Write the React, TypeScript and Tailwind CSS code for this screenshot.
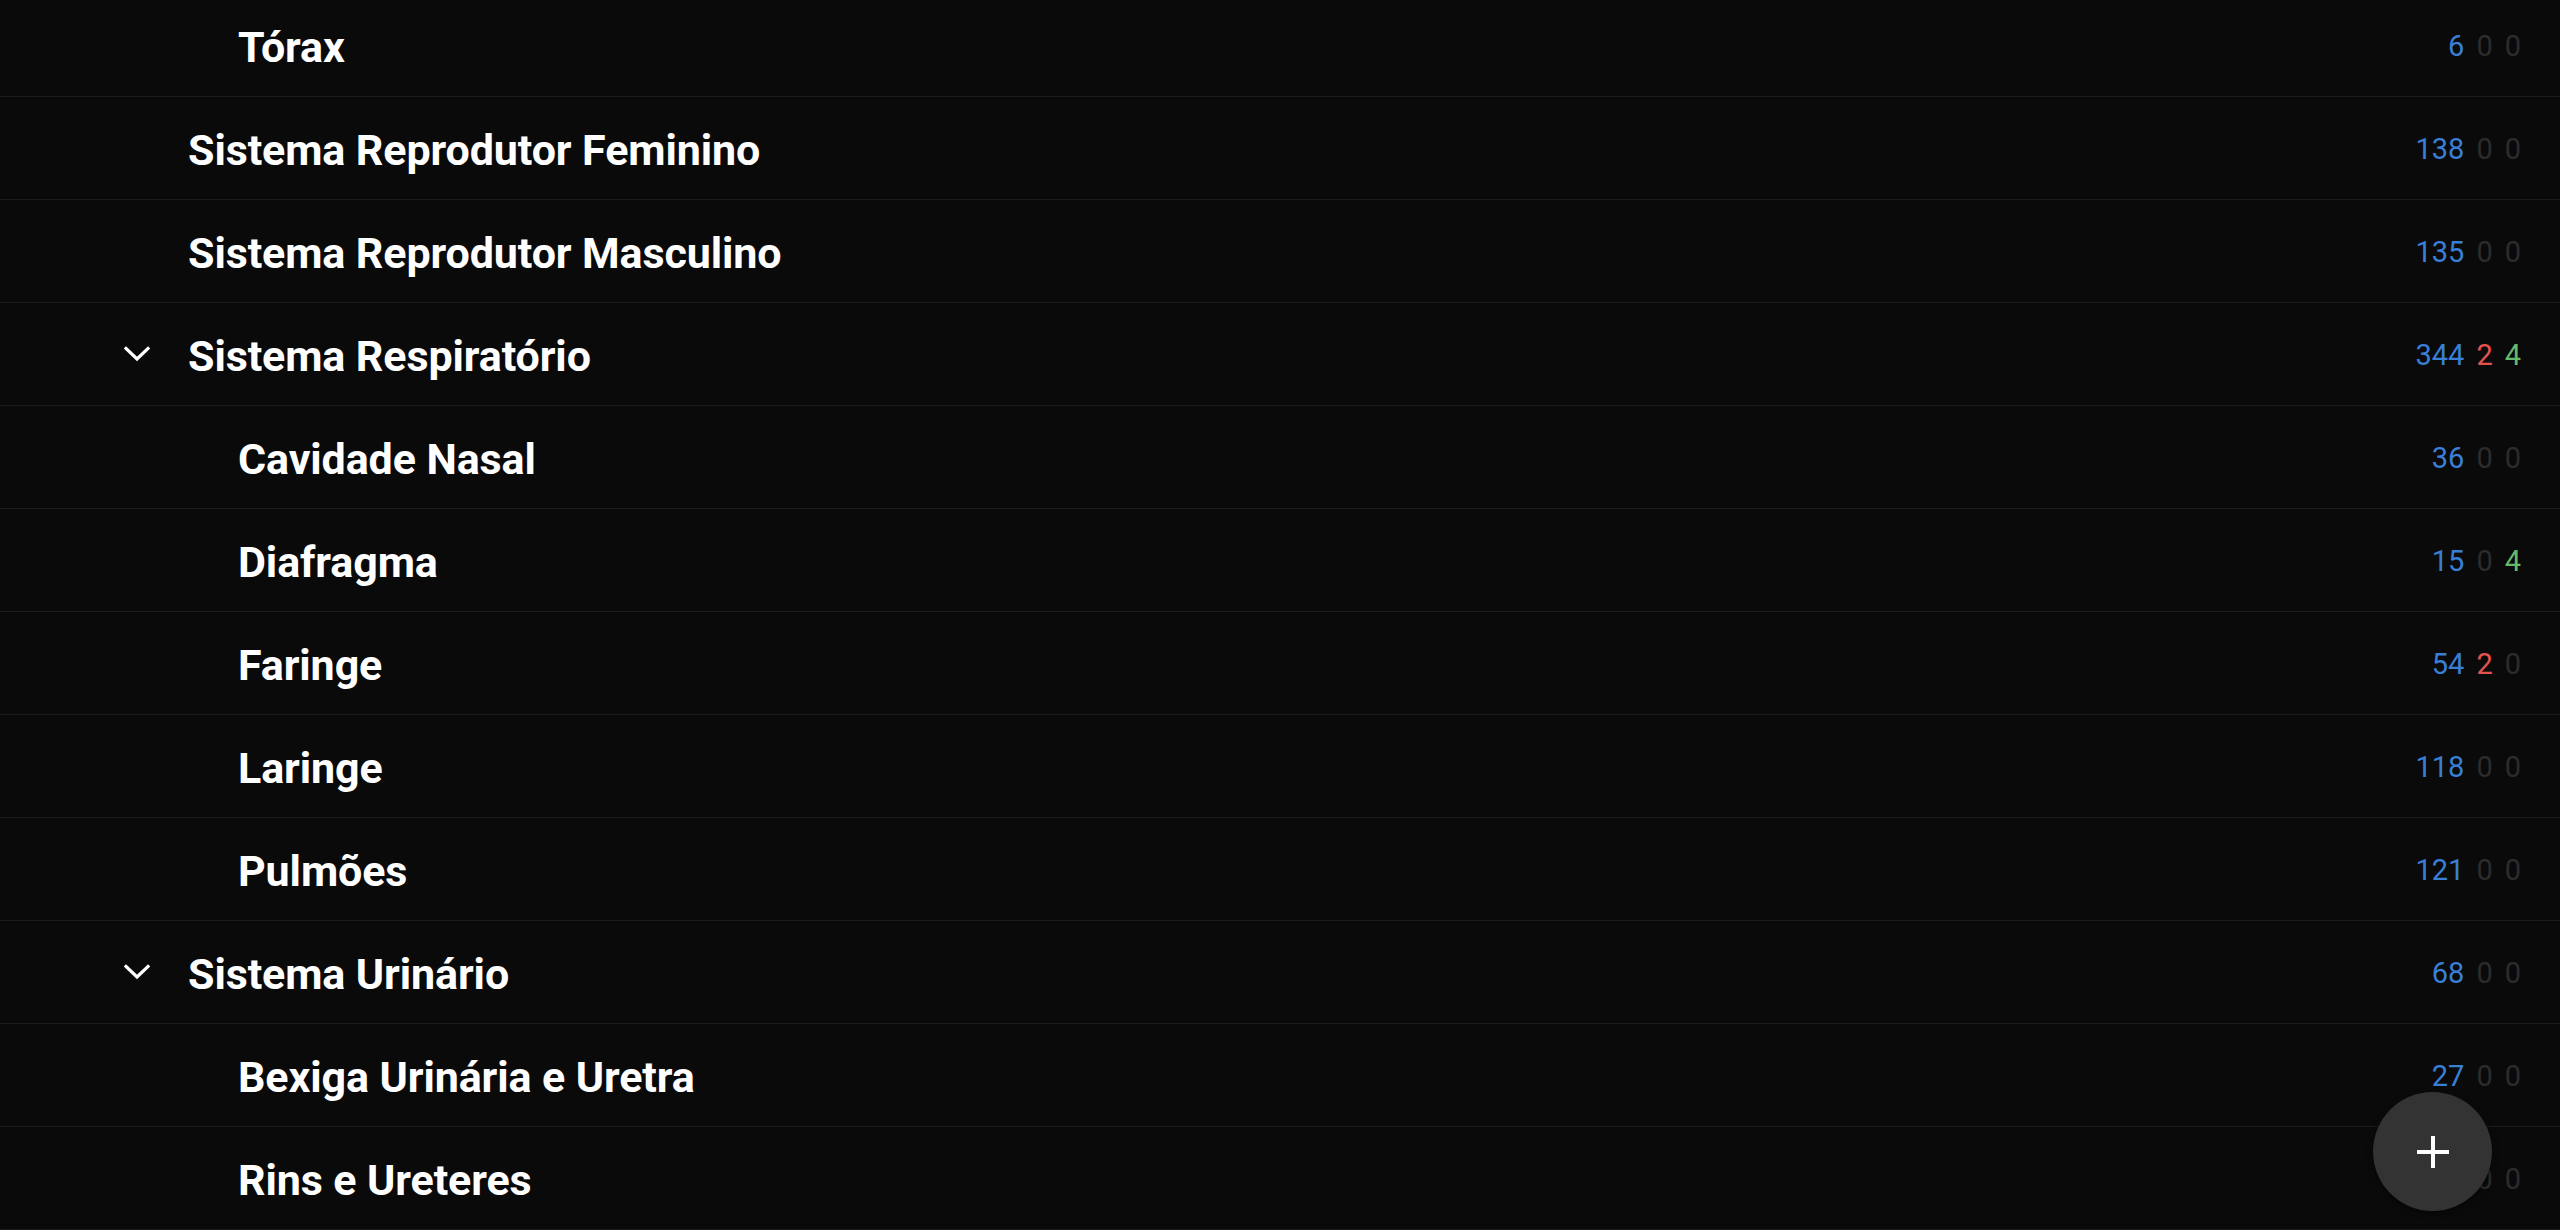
import React from "react";

type Row = {
  name: string;
  level: 1 | 2;
  expanded?: boolean;
  total: number;
  red: number;
  green: number;
};

const rows: Row[] = [
  { name: "Tórax", level: 2, total: 6, red: 0, green: 0 },
  { name: "Sistema Reprodutor Feminino", level: 1, total: 138, red: 0, green: 0 },
  { name: "Sistema Reprodutor Masculino", level: 1, total: 135, red: 0, green: 0 },
  { name: "Sistema Respiratório", level: 1, expanded: true, total: 344, red: 2, green: 4 },
  { name: "Cavidade Nasal", level: 2, total: 36, red: 0, green: 0 },
  { name: "Diafragma", level: 2, total: 15, red: 0, green: 4 },
  { name: "Faringe", level: 2, total: 54, red: 2, green: 0 },
  { name: "Laringe", level: 2, total: 118, red: 0, green: 0 },
  { name: "Pulmões", level: 2, total: 121, red: 0, green: 0 },
  { name: "Sistema Urinário", level: 1, expanded: true, total: 68, red: 0, green: 0 },
  { name: "Bexiga Urinária e Uretra", level: 2, total: 27, red: 0, green: 0 },
  { name: "Rins e Ureteres", level: 2, total: 42, red: 0, green: 0 },
];

function Chevron() {
  return (
    <svg width="26" height="16" viewBox="0 0 26 16" fill="none">
      <path d="M2 2.5 L13 13 L24 2.5" stroke="#ffffff" strokeWidth="3.2" strokeLinecap="square" strokeLinejoin="miter" />
    </svg>
  );
}

function Item({ r }: { r: Row }) {
  return (
    <div className="flex h-[103px] items-center border-b border-[#1b1b1b] pr-[39px]">
      <div className={r.level === 1 ? "w-[124px] shrink-0" : "w-[174px] shrink-0"} />
      <div className="flex w-[64px] shrink-0 items-center">
        {r.expanded ? <Chevron /> : null}
      </div>
      <div className="flex-1 pt-[5px] text-[43px] font-bold leading-none tracking-[-0.1px] text-white">{r.name}</div>
      <div className="flex items-center gap-3 pt-[3px] text-[29px] leading-none">
        <span className="text-[#3a7fd6]">{r.total}</span>
        <span className={r.red > 0 ? "text-[#e5534f]" : "text-[#2c2c2c]"}>{r.red}</span>
        <span className={r.green > 0 ? "text-[#66bb6a]" : "text-[#2c2c2c]"}>{r.green}</span>
      </div>
    </div>
  );
}

export default function App() {
  return (
    <div
      className="relative h-[1230px] w-[2560px] overflow-hidden bg-[#0a0a0a]"
      style={{ fontFamily: "Roboto, 'Noto Sans', sans-serif" }}
    >
      <div className="-mt-[6px]">
        {rows.map((r) => (
          <Item key={r.name} r={r} />
        ))}
      </div>
      <button className="absolute left-[2373px] top-[1092px] flex h-[119px] w-[119px] items-center justify-center rounded-full bg-[#333333] shadow-[0_2px_6px_rgba(0,0,0,0.5)]">
        <svg width="32" height="32" viewBox="0 0 32 32">
          <path d="M16 0 V32 M0 16 H32" stroke="#ffffff" strokeWidth="4" />
        </svg>
      </button>
    </div>
  );
}
